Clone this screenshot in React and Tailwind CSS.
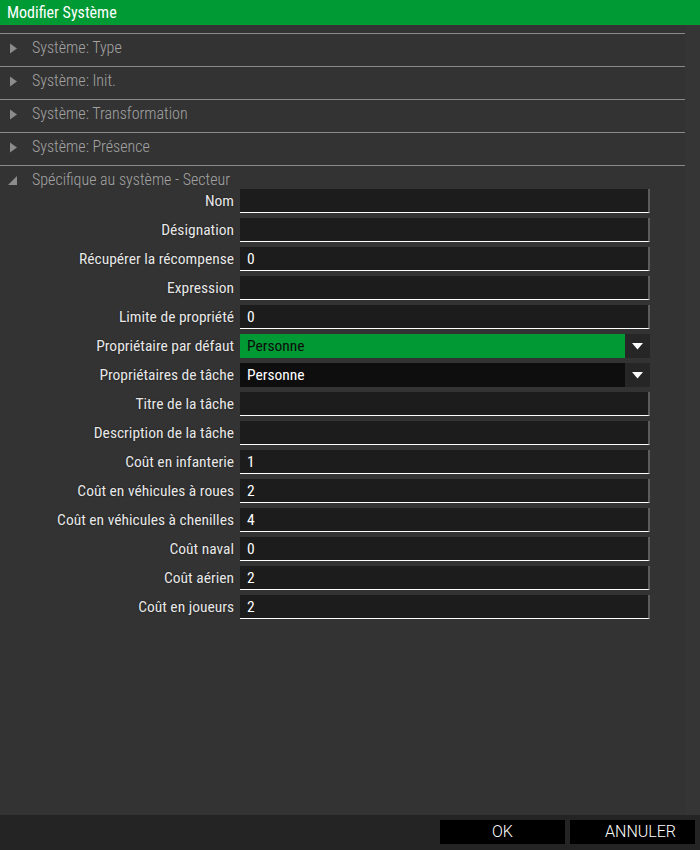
import React from "react";

const font = { fontFamily: "'Roboto Condensed', 'Liberation Sans Narrow', 'DejaVu Sans Condensed', Roboto, sans-serif" };
const btnFont = { fontFamily: "Roboto, 'Liberation Sans', sans-serif" };

const sections = ["Système: Type", "Système: Init.", "Système: Transformation", "Système: Présence"];

const fields = [
  { label: "Nom", value: "" },
  { label: "Désignation", value: "" },
  { label: "Récupérer la récompense", value: "0" },
  { label: "Expression", value: "" },
  { label: "Limite de propriété", value: "0" },
  { label: "Propriétaire par défaut", value: "Personne", select: "green" },
  { label: "Propriétaires de tâche", value: "Personne", select: "black" },
  { label: "Titre de la tâche", value: "" },
  { label: "Description de la tâche", value: "" },
  { label: "Coût en infanterie", value: "1" },
  { label: "Coût en véhicules à roues", value: "2" },
  { label: "Coût en véhicules à chenilles", value: "4" },
  { label: "Coût naval", value: "0" },
  { label: "Coût aérien", value: "2" },
  { label: "Coût en joueurs", value: "2" },
];

function TriRight() {
  return (
    <svg width="9" height="11" viewBox="0 0 9 11" className="shrink-0">
      <path d="M1 0.5 L8 5.5 L1 10.5 Z" fill="#8c8c8c" />
    </svg>
  );
}

function TriCorner() {
  return (
    <svg width="9" height="9" viewBox="0 0 9 9" className="shrink-0">
      <path d="M9 0 L9 9 L0 9 Z" fill="#8c8c8c" />
    </svg>
  );
}

function Caret() {
  return (
    <svg width="11" height="7" viewBox="0 0 11 7">
      <path d="M0 0 L11 0 L5.5 6.5 Z" fill="#ffffff" />
    </svg>
  );
}

export default function App() {
  return (
    <div className="w-[700px] h-[850px] flex flex-col bg-[#333333] overflow-hidden" style={font}>
      <div className="h-[25px] bg-[#009a35] flex items-center pl-[7px] text-white text-[16px] leading-none">
        Modifier Système
      </div>
      <div className="flex-1 flex">
        <div className="w-[685px] pt-[8px]">
          {sections.map((s) => (
            <div key={s} className="h-[33px] border-t border-[#8a8a8a] flex items-start">
              <div className="h-[28px] flex items-center">
                <div className="w-[32px] pl-[9px] flex items-center">
                  <TriRight />
                </div>
                <span className="text-[16px] font-light text-[#a3a3a3]">{s}</span>
              </div>
            </div>
          ))}
          <div className="h-[24px] border-t border-[#8a8a8a] flex items-start">
            <div className="h-[28px] flex items-center">
              <div className="w-[32px] pl-[8px] flex items-center">
                <TriCorner />
              </div>
              <span className="text-[16px] font-light text-[#a3a3a3]">Spécifique au système - Secteur</span>
            </div>
          </div>
          <div className="grid grid-cols-[234px_410px] gap-x-[6px] gap-y-[5px]">
            {fields.map((f) => (
              <React.Fragment key={f.label}>
                <div className="h-[24px] flex items-center justify-end pt-[2px] text-[15.5px] text-[#e8e8e8] whitespace-nowrap [text-shadow:0_0_2px_rgba(0,0,0,0.6)]">
                  {f.label}
                </div>
                {f.select ? (
                  <div className="h-[24px] flex">
                    <div
                      className={
                        "flex-1 flex items-center pl-[7px] pt-[2px] text-[15.5px] " +
                        (f.select === "green" ? "bg-[#009933] text-[#0d0d0d]" : "bg-[#0e0e0e] text-white")
                      }
                    >
                      {f.value}
                    </div>
                    <div className="w-[25px] bg-[#262626] flex items-center justify-center">
                      <Caret />
                    </div>
                  </div>
                ) : (
                  <div className="h-[24px] bg-[#1c1c1c] border-b border-b-white border-r-2 border-r-[#5c5c5c] flex items-center pl-[7px] pt-[2px] text-[15.5px] text-white">
                    {f.value}
                  </div>
                )}
              </React.Fragment>
            ))}
          </div>
        </div>
        <div className="flex-1 bg-[#353535]" />
      </div>
      <div className="h-[35px] bg-[#242424] flex justify-end items-start pt-[5px] pr-[5px] gap-[5px]" style={btnFont}>
        <div className="w-[125px] h-[24px] bg-black text-white flex items-center justify-center text-[16px] font-light">
          OK
        </div>
        <div className="w-[125px] h-[24px] bg-black text-white flex items-center justify-center pl-[16px] text-[16px] font-light">
          ANNULER
        </div>
      </div>
    </div>
  );
}
